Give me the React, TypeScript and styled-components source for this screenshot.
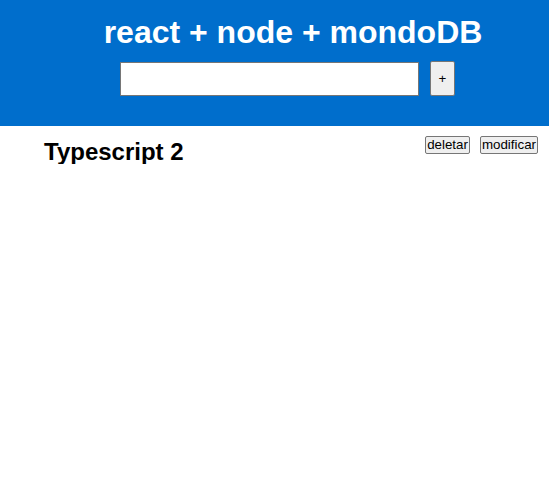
import React, { useState } from "react";
import styled, { createGlobalStyle } from "styled-components";

const GlobalStyle = createGlobalStyle`
  html, body {
    margin: 0;
    padding: 0;
    background: #ffffff;
    font-family: "Liberation Sans", Arial, sans-serif;
  }
`;

const Header = styled.header`
  background: #006ecc;
  display: flex;
  flex-direction: column;
  align-items: center;
  padding: 16px 0 30px 37px;
`;

const Title = styled.h1`
  margin: 0;
  font-size: 32px;
  line-height: 32px;
  font-weight: 700;
  color: #ffffff;
`;

const Form = styled.form`
  display: flex;
  align-items: flex-end;
  gap: 11px;
  margin: 13px 11px 0 0;
`;

const TextInput = styled.input`
  box-sizing: border-box;
  width: 299px;
  height: 34px;
  border: 1px solid #767676;
  border-radius: 0;
  background: #ffffff;
  padding: 1px 4px;
  font-size: 16px;
  font-family: "Liberation Sans", Arial, sans-serif;
`;

const Button = styled.button<{ $tall?: boolean }>`
  box-sizing: border-box;
  height: ${(p) => (p.$tall ? "35px" : "18px")};
  min-width: ${(p) => (p.$tall ? "25px" : "0")};
  padding: 0 1px;
  border: 1px solid #767676;
  border-radius: 2px;
  background: #efefef;
  color: #000000;
  font-family: "Liberation Sans", Arial, sans-serif;
  font-size: 13.33px;
  line-height: 14px;
  cursor: pointer;
`;

const List = styled.main`
  display: flex;
  flex-direction: column;
`;

const Item = styled.div`
  display: flex;
  justify-content: space-between;
  align-items: flex-start;
  padding: 10px 11px 0 44px;
`;

const ItemName = styled.h2`
  margin: 4px 0 0;
  font-size: 24px;
  line-height: 24px;
  font-weight: 700;
  color: #000000;
`;

const Actions = styled.div`
  display: flex;
  gap: 10px;
`;

export default function App() {
  const [text, setText] = useState("");
  const [items] = useState(["Typescript 2"]);

  return (
    <>
      <GlobalStyle />
      <Header>
        <Title>react + node + mondoDB</Title>
        <Form onSubmit={(e) => e.preventDefault()}>
          <TextInput value={text} onChange={(e) => setText(e.target.value)} />
          <Button $tall type="submit">
            +
          </Button>
        </Form>
      </Header>
      <List>
        {items.map((item) => (
          <Item key={item}>
            <ItemName>{item}</ItemName>
            <Actions>
              <Button>deletar</Button>
              <Button>modificar</Button>
            </Actions>
          </Item>
        ))}
      </List>
    </>
  );
}
